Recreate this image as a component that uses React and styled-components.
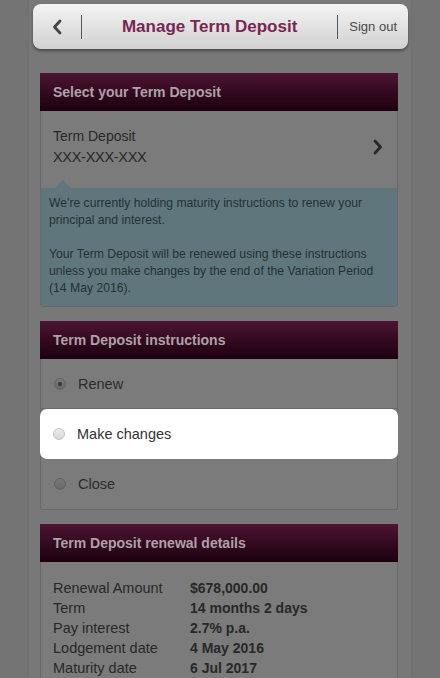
import React from "react";
import styled, { createGlobalStyle } from "styled-components";

const GlobalStyle = createGlobalStyle`
  html, body {
    margin: 0;
    padding: 0;
    background: #747474;
    font-family: "Liberation Sans", Arial, sans-serif;
  }
`;

const Page = styled.div`
  width: 384px;
  min-height: 678px;
  margin-left: 28px;
  background: #787878;
  border-left: 1px solid #707070;
  border-right: 1px solid #707070;
  box-sizing: border-box;
  overflow: hidden;
`;

const TopBar = styled.div`
  display: flex;
  align-items: center;
  height: 45px;
  width: 375px;
  margin: 4px 0 0 4px;
  border-radius: 8px;
  background: linear-gradient(#f3f3f3, #d1d1d1);
  box-shadow: 0 2px 3px rgba(0, 0, 0, 0.38);
  box-sizing: border-box;
`;

const BackButton = styled.div`
  width: 49px;
  height: 24px;
  display: flex;
  align-items: center;
  justify-content: center;
  border-right: 1px solid #555;
  box-sizing: border-box;
`;

const BarTitle = styled.div`
  flex: 1;
  text-align: center;
  font-size: 17px;
  font-weight: bold;
  color: #772752;
  padding-top: 1px;
`;

const SignOut = styled.div`
  height: 24px;
  display: flex;
  align-items: center;
  border-left: 1px solid #555;
  padding: 0 11px;
  font-size: 13px;
  color: #4a4a4a;
`;

const Content = styled.div`
  padding: 24px 13px 0 11px;
  display: flex;
  flex-direction: column;
  gap: 14px;
`;

const Section = styled.section``;

const SectionHead = styled.h2`
  margin: 0;
  height: 38px;
  line-height: 38px;
  padding-left: 13px;
  font-size: 14px;
  font-weight: bold;
  color: #ada2a7;
  background: linear-gradient(#4c1432, #1c000f);
`;

const SectionBody = styled.div`
  background: #7b7b7b;
  border: 1px solid #686868;
  border-top: none;
  border-radius: 0 0 3px 3px;
  padding: ${(p) => p.$pad || "0"};
`;

const AccountRow = styled.div`
  display: flex;
  align-items: center;
  justify-content: space-between;
  padding: 15px 14px 20px 12px;
  color: #282828;
  font-size: 14px;
  line-height: 21px;
`;

const Mono = styled.div`
  letter-spacing: -0.3px;
  font-size: 14.5px;
`;

const InfoBox = styled.div`
  position: relative;
  background: #5f777c;
  color: #263032;
  font-size: 12.2px;
  line-height: 17px;
  padding: 7px 9px 9px 8px;

  &::before {
    content: "";
    position: absolute;
    top: -8px;
    left: 14px;
    border-left: 8px solid transparent;
    border-right: 8px solid transparent;
    border-bottom: 8px solid #5f777c;
  }

  p {
    margin: 0 0 17px;
  }
  p:last-child {
    margin: 0;
  }
`;

const OptionRow = styled.div`
  display: flex;
  align-items: center;
  gap: 12px;
  height: 50px;
  padding-left: 13px;
  font-size: 14.5px;
  color: ${(p) => (p.$active ? "#333" : "#2b2b2b")};
  background: ${(p) => (p.$active ? "#ffffff" : "transparent")};
  border-radius: ${(p) => (p.$active ? "7px" : "0")};
  border-bottom: 1px solid ${(p) => (p.$active ? "transparent" : "#6a6a6a")};
  margin: ${(p) => (p.$active ? "0 -1px" : "0")};
  box-sizing: border-box;

  &:last-child {
    border-bottom: none;
  }
`;

const Radio = styled.span`
  width: 12px;
  height: 12px;
  border-radius: 50%;
  box-sizing: border-box;
  display: inline-flex;
  align-items: center;
  justify-content: center;
  background: ${(p) =>
    p.$bright ? "linear-gradient(#ececec, #d6d6d6)" : "linear-gradient(#777, #696969)"};
  border: 1px solid ${(p) => (p.$bright ? "#c4c4c4" : "#626262")};

  &::after {
    content: "";
    width: 4px;
    height: 4px;
    border-radius: 50%;
    background: ${(p) => (p.$checked ? "#363636" : "transparent")};
  }
`;

const DetailGrid = styled.div`
  display: grid;
  grid-template-columns: 137px 1fr;
  font-size: 14.5px;
  line-height: 20px;
  color: #282828;
`;

const Value = styled.div`
  font-weight: bold;
  font-size: 14px;
`;

const Chevron = ({ dir = "right", color = "#282828" }) => (
  <svg width="10" height="16" viewBox="0 0 10 16">
    <path
      d={dir === "left" ? "M8 2 L2.5 8 L8 14" : "M2 2 L7.5 8 L2 14"}
      fill="none"
      stroke={color}
      strokeWidth="2.8"
      strokeLinecap="round"
      strokeLinejoin="round"
    />
  </svg>
);

const details = [
  ["Renewal Amount", "$678,000.00"],
  ["Term", "14 months 2 days"],
  ["Pay interest", "2.7% p.a."],
  ["Lodgement date", "4 May 2016"],
  ["Maturity date", "6 Jul 2017"],
];

export default function App() {
  return (
    <>
      <GlobalStyle />
      <Page>
        <TopBar>
          <BackButton>
            <Chevron dir="left" color="#444" />
          </BackButton>
          <BarTitle>Manage Term Deposit</BarTitle>
          <SignOut>Sign out</SignOut>
        </TopBar>

        <Content>
          <Section>
            <SectionHead>Select your Term Deposit</SectionHead>
            <SectionBody>
              <AccountRow>
                <div>
                  <div>Term Deposit</div>
                  <Mono>XXX-XXX-XXX</Mono>
                </div>
                <Chevron />
              </AccountRow>
              <InfoBox>
                <p>
                  We're currently holding maturity instructions to renew your
                  principal and interest.
                </p>
                <p>
                  Your Term Deposit will be renewed using these instructions
                  unless you make changes by the end of the Variation Period
                  (14 May 2016).
                </p>
              </InfoBox>
            </SectionBody>
          </Section>

          <Section>
            <SectionHead>Term Deposit instructions</SectionHead>
            <SectionBody>
              <OptionRow>
                <Radio $checked />
                Renew
              </OptionRow>
              <OptionRow $active>
                <Radio $bright />
                Make changes
              </OptionRow>
              <OptionRow>
                <Radio />
                Close
              </OptionRow>
            </SectionBody>
          </Section>

          <Section>
            <SectionHead>Term Deposit renewal details</SectionHead>
            <SectionBody $pad="16px 12px 12px">
              <DetailGrid>
                {details.map(([label, value]) => (
                  <React.Fragment key={label}>
                    <div>{label}</div>
                    <Value>{value}</Value>
                  </React.Fragment>
                ))}
              </DetailGrid>
            </SectionBody>
          </Section>
        </Content>
      </Page>
    </>
  );
}
